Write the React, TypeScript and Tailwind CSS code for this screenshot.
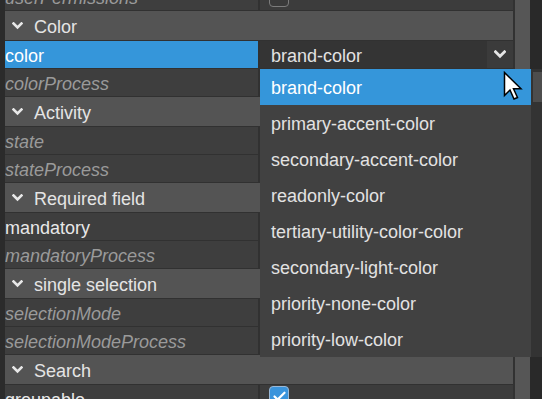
import { Check } from 'lucide-react';

type Row =
  | { kind: 'header'; title: string }
  | { kind: 'prop'; name: string; italic?: boolean; selected?: boolean; value?: 'check-off' | 'check-on' | 'select' };

const rows: Row[] = [
  { kind: 'prop', name: 'userPermissions', italic: true, value: 'check-off' },
  { kind: 'header', title: 'Color' },
  { kind: 'prop', name: 'color', selected: true, value: 'select' },
  { kind: 'prop', name: 'colorProcess', italic: true },
  { kind: 'header', title: 'Activity' },
  { kind: 'prop', name: 'state', italic: true },
  { kind: 'prop', name: 'stateProcess', italic: true },
  { kind: 'header', title: 'Required field' },
  { kind: 'prop', name: 'mandatory' },
  { kind: 'prop', name: 'mandatoryProcess', italic: true },
  { kind: 'header', title: 'single selection' },
  { kind: 'prop', name: 'selectionMode', italic: true },
  { kind: 'prop', name: 'selectionModeProcess', italic: true },
  { kind: 'header', title: 'Search' },
  { kind: 'prop', name: 'groupable', value: 'check-on' },
];

const options = [
  'brand-color',
  'primary-accent-color',
  'secondary-accent-color',
  'readonly-color',
  'tertiary-utility-color-color',
  'secondary-light-color',
  'priority-none-color',
  'priority-low-color',
];

function Chevron({ className, big }: { className?: string; big?: boolean }) {
  return big ? (
    <svg width="12" height="9" viewBox="0 0 12 9" className={className} aria-hidden="true">
      <path d="M1.5 1.8 L6 6.3 L10.5 1.8" fill="none" stroke="currentColor" strokeWidth="2.8" strokeLinecap="square" />
    </svg>
  ) : (
    <svg width="11" height="8" viewBox="0 0 11 8" className={className} aria-hidden="true">
      <path d="M1.5 1.5 L5.5 5.5 L9.5 1.5" fill="none" stroke="currentColor" strokeWidth="2.6" strokeLinecap="square" />
    </svg>
  );
}

function Value({ value }: { value?: 'check-off' | 'check-on' | 'select' }) {
  if (value === 'check-off') {
    return (
      <div className="h-full flex items-center pl-[9px]">
        <div className="w-[20px] h-[20px] rounded-[4px] border border-[#7c7c7c] bg-[#3a3a3a]" />
      </div>
    );
  }
  if (value === 'check-on') {
    return (
      <div className="h-full flex items-start pt-[1px] pl-[9px]">
        <div className="w-[20px] h-[20px] rounded-[4px] border border-[#9ab8d6] bg-[#3a94dc] flex items-center justify-center">
          <Check size={15} strokeWidth={3.5} className="text-white" />
        </div>
      </div>
    );
  }
  if (value === 'select') {
    return (
      <div className="h-full flex bg-[#343434]">
        <div className="flex-1 pl-[11px] pt-[5px] leading-[20px] text-[#e2e2e2]">brand-color</div>
        <div className="w-[26px] flex items-center justify-center bg-[#3b3b3b] text-[#e6e6e6]">
          <Chevron big />
        </div>
      </div>
    );
  }
  return null;
}

function PropertyRow({ row }: { row: Row }) {
  if (row.kind === 'header') {
    return (
      <div className="h-[29px] shrink-0 bg-[#545454] flex items-start text-[#e4e4e4]">
        <Chevron className="mt-[11px] ml-[7px] text-[#e8e8e8]" />
        <span className="ml-[11px] pt-[6px] leading-[20px]">{row.title}</span>
      </div>
    );
  }
  return (
    <div className="h-[27px] shrink-0 flex gap-[2px]">
      <div
        className={`w-[253px] pt-[5px] leading-[20px] whitespace-nowrap overflow-hidden ${
          row.selected
            ? 'bg-[#3596da] text-white'
            : row.italic
              ? 'bg-[#3e3e3e] text-[#9a9a9a] italic'
              : 'bg-[#3e3e3e] text-[#e8e8e8]'
        }`}
      >
        {row.name}
      </div>
      <div className="w-[253px] bg-[#3c3c3c]">
        <Value value={row.value} />
      </div>
    </div>
  );
}

export default function App() {
  return (
    <div className="relative w-[542px] h-[399px] overflow-hidden flex bg-[#2b2b2b] font-['Liberation_Sans',Arial,sans-serif] text-[18px]">
      <div className="w-[5px] shrink-0 bg-[#2b2b2b]" />

      {/* property grid */}
      <div className="w-[508px] shrink-0 -mt-[17px] flex flex-col gap-[1px] bg-[#313131]">
        {rows.map((row, i) => (
          <PropertyRow key={i} row={row} />
        ))}
      </div>

      <div className="w-[2px] shrink-0 bg-[#323232]" />
      <div className="w-[15px] shrink-0 bg-[#565656]" />
      <div className="flex-1 bg-[#292929]" />

      {/* dropdown list */}
      <div className="absolute left-[260px] top-[69px] w-[300px] h-[288px] flex">
        <div className="w-[271px] flex flex-col bg-[#414141]">
          {options.map((opt, i) => (
            <div
              key={opt}
              className={`h-[36px] shrink-0 flex items-center pl-[11px] pt-[2px] leading-[20px] whitespace-nowrap ${
                i === 0 ? 'bg-[#3596da] text-white' : 'text-[#e2e2e2]'
              }`}
            >
              {opt}
            </div>
          ))}
        </div>
        <div className="flex-1 bg-[#333333] pl-[2px] pt-[3px]">
          <div className="h-[30px] bg-[#4d4d4d]" />
        </div>
      </div>

      {/* mouse pointer */}
      <svg className="absolute left-[503px] top-[71px]" width="20" height="30" viewBox="0 0 20 30" aria-hidden="true">
        <path
          d="M1.5 1.5 L1.5 24.5 L7 19 L11 28 L14.5 26.5 L10.5 17.8 L18 17.8 Z"
          fill="#ffffff"
          stroke="#000000"
          strokeWidth="1.5"
          strokeLinejoin="miter"
        />
      </svg>
    </div>
  );
}
